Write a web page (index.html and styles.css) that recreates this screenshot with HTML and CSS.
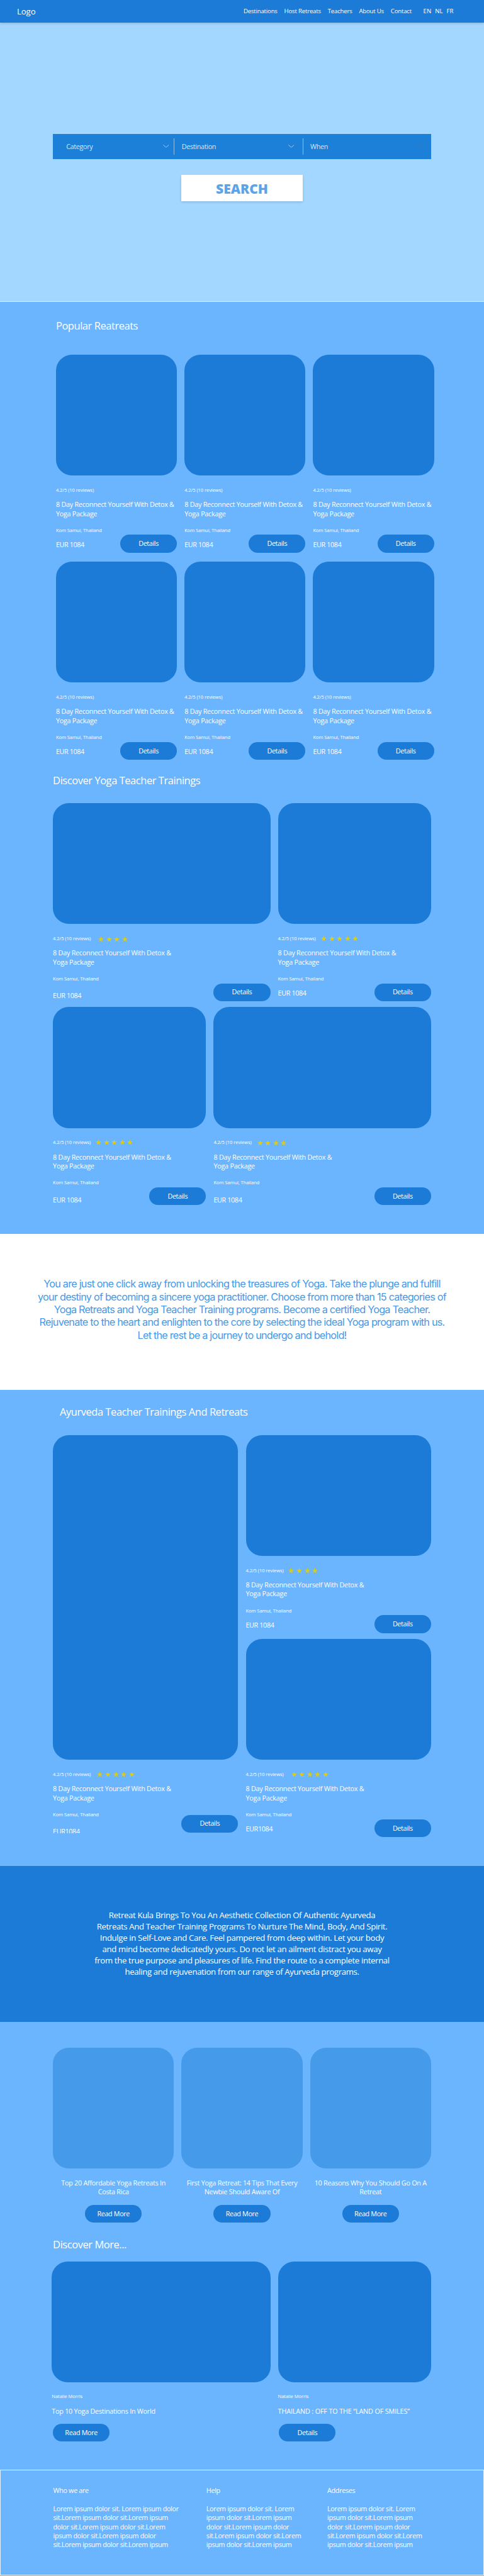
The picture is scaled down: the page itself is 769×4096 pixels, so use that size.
FILE: index.html
```html
<!DOCTYPE html>
<html lang="en">
<head>
<meta charset="utf-8">
<title>Retreat Kula</title>
<link rel="stylesheet" href="styles.css">
</head>
<body>
<svg class="defs" aria-hidden="true">
  <symbol id="star" viewBox="0 0 14 13.4"><path d="M7 0l1.65 5.1H14l-4.33 3.15 1.65 5.1L7 10.2l-4.33 3.15 1.65-5.1L0 5.1h5.35z"/></symbol>
  <symbol id="chevron" viewBox="0 0 16 8"><path d="M.5.6 8 7.2 15.500.6" fill="none" stroke="currentColor" stroke-width="1.2"/></symbol>
</svg>

<header class="topbar">
  <a class="logo">Logo</a>
  <nav class="nav"><a>Destinations</a><a>Host Retreats</a><a>Teachers</a><a>About Us</a><a>Contact</a></nav>
  <div class="langs"><a>EN</a><a>NL</a><a>FR</a></div>
</header>

<section class="hero">
  <form class="search">
    <div class="field field-category"><span>Category</span><svg class="chev"><use href="#chevron"/></svg></div>
    <div class="field field-destination"><span>Destination</span><svg class="chev"><use href="#chevron"/></svg></div>
    <div class="field field-when"><span>When</span><svg class="chev chev-dim"><use href="#chevron"/></svg></div>
  </form>
  <button class="search-btn">SEARCH</button>
</section>

<main>
<section class="listing">
  <h2 class="heading heading-popular">Popular Reatreats</h2>
  <div class="grid-3">
    <article class="card"><div class="photo"></div><div class="rating"><span>4.2/5 (10 reviews)</span></div><h3>8 Day Reconnect Yourself With Detox &amp;<br>Yoga Package</h3><p class="place">Kom Samui, Thailand</p><div class="buy"><span>EUR 1084</span><a class="btn">Details</a></div></article>
    <article class="card"><div class="photo"></div><div class="rating"><span>4.2/5 (10 reviews)</span></div><h3>8 Day Reconnect Yourself With Detox &amp;<br>Yoga Package</h3><p class="place">Kom Samui, Thailand</p><div class="buy"><span>EUR 1084</span><a class="btn">Details</a></div></article>
    <article class="card"><div class="photo"></div><div class="rating"><span>4.2/5 (10 reviews)</span></div><h3>8 Day Reconnect Yourself With Detox &amp;<br>Yoga Package</h3><p class="place">Kom Samui, Thailand</p><div class="buy"><span>EUR 1084</span><a class="btn">Details</a></div></article>
    <article class="card"><div class="photo"></div><div class="rating"><span>4.2/5 (10 reviews)</span></div><h3>8 Day Reconnect Yourself With Detox &amp;<br>Yoga Package</h3><p class="place">Kom Samui, Thailand</p><div class="buy"><span>EUR 1084</span><a class="btn">Details</a></div></article>
    <article class="card"><div class="photo"></div><div class="rating"><span>4.2/5 (10 reviews)</span></div><h3>8 Day Reconnect Yourself With Detox &amp;<br>Yoga Package</h3><p class="place">Kom Samui, Thailand</p><div class="buy"><span>EUR 1084</span><a class="btn">Details</a></div></article>
    <article class="card"><div class="photo"></div><div class="rating"><span>4.2/5 (10 reviews)</span></div><h3>8 Day Reconnect Yourself With Detox &amp;<br>Yoga Package</h3><p class="place">Kom Samui, Thailand</p><div class="buy"><span>EUR 1084</span><a class="btn">Details</a></div></article>
  </div>

  <h2 class="heading heading-trainings">Discover Yoga Teacher Trainings</h2>
  <div class="trainings">
    <div class="row row-wide-first">
      <article class="card price-low"><div class="photo"></div><div class="rating"><span>4.2/5 (10 reviews)</span><div class="stars stars-a"><svg><use href="#star"/></svg><svg><use href="#star"/></svg><svg><use href="#star"/></svg><svg><use href="#star"/></svg></div></div><h3>8 Day Reconnect Yourself With Detox &amp;<br>Yoga Package</h3><p class="place">Kom Samui, Thailand</p><div class="buy"><span>EUR 1084</span><a class="btn">Details</a></div></article>
      <article class="card"><div class="photo"></div><div class="rating"><span>4.2/5 (10 reviews)</span><div class="stars stars-b"><svg><use href="#star"/></svg><svg><use href="#star"/></svg><svg><use href="#star"/></svg><svg><use href="#star"/></svg><svg><use href="#star"/></svg></div></div><h3>8 Day Reconnect Yourself With Detox &amp;<br>Yoga Package</h3><p class="place">Kom Samui, Thailand</p><div class="buy"><span>EUR 1084</span><a class="btn">Details</a></div></article>
    </div>
    <div class="row row-wide-last">
      <article class="card price-low"><div class="photo"></div><div class="rating"><span>4.2/5 (10 reviews)</span><div class="stars stars-c"><svg><use href="#star"/></svg><svg><use href="#star"/></svg><svg><use href="#star"/></svg><svg><use href="#star"/></svg><svg><use href="#star"/></svg></div></div><h3>8 Day Reconnect Yourself With Detox &amp;<br>Yoga Package</h3><p class="place">Kom Samui, Thailand</p><div class="buy"><span>EUR 1084</span><a class="btn">Details</a></div></article>
      <article class="card price-low"><div class="photo"></div><div class="rating"><span>4.2/5 (10 reviews)</span><div class="stars stars-d"><svg><use href="#star"/></svg><svg><use href="#star"/></svg><svg><use href="#star"/></svg><svg><use href="#star"/></svg></div></div><h3>8 Day Reconnect Yourself With Detox &amp;<br>Yoga Package</h3><p class="place">Kom Samui, Thailand</p><div class="buy"><span>EUR 1084</span><a class="btn">Details</a></div></article>
    </div>
  </div>
</section>

<section class="pitch">
  <p>You are just one click away from unlocking the treasures of Yoga. Take the plunge and fulfill<br>your destiny of becoming a sincere yoga practitioner. Choose from more than 15 categories of<br>Yoga Retreats and Yoga Teacher Training programs. Become a certified Yoga Teacher.<br>Rejuvenate to the heart and enlighten to the core by selecting the ideal Yoga program with us.<br>Let the rest be a journey to undergo and behold!</p>
</section>

<section class="ayurveda">
  <h2 class="heading heading-ayurveda">Ayurveda Teacher Trainings And Retreats</h2>
  <div class="split">
    <article class="card card-tall"><div class="photo"></div><div class="rating"><span>4.2/5 (10 reviews)</span><div class="stars stars-e"><svg><use href="#star"/></svg><svg><use href="#star"/></svg><svg><use href="#star"/></svg><svg><use href="#star"/></svg><svg><use href="#star"/></svg></div></div><h3>8 Day Reconnect Yourself With Detox &amp;<br>Yoga Package</h3><p class="place">Kom Samui, Thailand</p><div class="buy"><span>EUR1084</span><a class="btn">Details</a></div></article>
    <div class="stack">
      <article class="card"><div class="photo"></div><div class="rating"><span>4.2/5 (10 reviews)</span><div class="stars stars-c"><svg><use href="#star"/></svg><svg><use href="#star"/></svg><svg><use href="#star"/></svg><svg><use href="#star"/></svg></div></div><h3>8 Day Reconnect Yourself With Detox &amp;<br>Yoga Package</h3><p class="place">Kom Samui, Thailand</p><div class="buy"><span>EUR 1084</span><a class="btn">Details</a></div></article>
      <article class="card"><div class="photo"></div><div class="rating"><span>4.2/5 (10 reviews)</span><div class="stars stars-f"><svg><use href="#star"/></svg><svg><use href="#star"/></svg><svg><use href="#star"/></svg><svg><use href="#star"/></svg><svg><use href="#star"/></svg></div></div><h3>8 Day Reconnect Yourself With Detox &amp;<br>Yoga Package</h3><p class="place">Kom Samui, Thailand</p><div class="buy"><span>EUR1084</span><a class="btn">Details</a></div></article>
    </div>
  </div>
</section>

<section class="about">
  <p>Retreat Kula Brings To You An Aesthetic Collection Of Authentic Ayurveda<br>Retreats And Teacher Training Programs To Nurture The Mind, Body, And Spirit.<br>Indulge in Self-Love and Care. Feel pampered from deep within. Let your body<br>and mind become dedicatedly yours. Do not let an ailment distract you away<br>from the true purpose and pleasures of life. Find the route to a complete internal<br>healing and rejuvenation from our range of Ayurveda programs.</p>
</section>

<section class="blog">
  <div class="posts">
    <article class="post"><div class="photo photo-light"></div><h3>Top 20 Affordable Yoga Retreats In<br>Costa Rica</h3><a class="btn">Read More</a></article>
    <article class="post"><div class="photo photo-light"></div><h3>First Yoga Retreat: 14 Tips That Every<br>Newbie Should Aware Of</h3><a class="btn">Read More</a></article>
    <article class="post"><div class="photo photo-light"></div><h3>10 Reasons Why You Should Go On A<br>Retreat</h3><a class="btn">Read More</a></article>
  </div>
  <h2 class="heading heading-more">Discover More...</h2>
  <div class="features">
    <article class="feature"><div class="photo"></div><p class="author">Natalie Morris</p><h3>Top 10 Yoga Destinations In World</h3><a class="btn">Read More</a></article>
    <article class="feature"><div class="photo"></div><p class="author">Natalie Morris</p><h3 class="caps">THAILAND : OFF TO THE “LAND OF SMILES”</h3><a class="btn">Details</a></article>
  </div>
</section>
</main>

<footer class="footer">
  <div><h4>Who we are</h4><p>Lorem ipsum dolor sit. Lorem ipsum dolor<br>sit.Lorem ipsum dolor sit.Lorem ipsum<br>dolor sit.Lorem ipsum dolor sit.Lorem<br>ipsum dolor sit.Lorem ipsum dolor<br>sit.Lorem ipsum dolor sit.Lorem ipsum</p></div>
  <div><h4>Help</h4><p>Lorem ipsum dolor sit. Lorem<br>ipsum dolor sit.Lorem ipsum<br>dolor sit.Lorem ipsum dolor<br>sit.Lorem ipsum dolor sit.Lorem<br>ipsum dolor sit.Lorem ipsum</p></div>
  <div><h4>Addreses</h4><p>Lorem ipsum dolor sit. Lorem<br>ipsum dolor sit.Lorem ipsum<br>dolor sit.Lorem ipsum dolor<br>sit.Lorem ipsum dolor sit.Lorem<br>ipsum dolor sit.Lorem ipsum</p></div>
</footer>
</body>
</html>
```
FILE: styles.css
```css
/* The layout is designed on a 128rem wide canvas. */
html { font-size: calc(100vw / 128); }
* { box-sizing: border-box; }
body {
  margin: 0;
  background: #6bb4fe;
  color: #fff;
  font-family: "Open Sans", "Noto Sans", sans-serif;
  font-size: 1.8rem;
  line-height: 2.4rem;
  letter-spacing: -.023em;
  white-space: nowrap;
}
h2, h3, h4, p { margin: 0; font-weight: 400; }
.defs { display: none; }

/* Header */
.topbar {
  position: relative;
  display: flex;
  align-items: center;
  height: 6rem;
  padding: 0 8.1rem 0 4.5rem;
  background: #1c7bd7;
  box-shadow: 0 .3rem .6rem rgba(0, 0, 0, .16);
  font-size: 1.6rem;
}
.logo { font-size: 2.2rem; letter-spacing: -.01em; margin-right: auto; }
.nav { display: flex; gap: 1.8rem; letter-spacing: -.02em; }
.langs { display: flex; gap: 1rem; margin-left: 3.1rem; letter-spacing: 0; }

/* Hero with search */
.hero {
  height: 73.7rem;
  padding-top: 29.4rem;
  background: #a3d7ff;
}
.search {
  display: grid;
  grid-template-columns: 32rem 34rem 34rem;
  width: 100rem;
  height: 6.7rem;
  margin: 0 auto;
  padding: 1.2rem 0;
  background: #1c80d8;
  color: #d6e8fa;
  letter-spacing: -.03em;
}
.field {
  display: flex;
  align-items: center;
  justify-content: space-between;
  padding: 0 1.3rem 0 2rem;
}
.field + .field { border-left: .2rem solid #8fc3ef; padding-left: 1.9rem; padding-right: 2.2rem; }
.field-category { padding-left: 3.5rem; }
.field-when.field-when { padding-right: 1.8rem; }
.chev { width: 1.6rem; height: .8rem; }
.chev-dim { color: #3f7bb4; }
.search-btn {
  display: block;
  width: 32rem;
  height: 7rem;
  margin: 4.2rem auto 0;
  padding: .4rem 0 0;
  border: 0;
  background: #fff;
  color: #5ba4e8;
  box-shadow: 0 .3rem .6rem rgba(0, 0, 0, .16);
  font: 800 3.5rem/6rem "Open Sans", sans-serif;
}

/* Shared pieces */
.heading { font-size: 2.75rem; line-height: 3.6rem; letter-spacing: -.028em; }
.photo { height: 32rem; border-radius: 4.2rem; background: #1c7bd7; }
.photo-light { background: #459aea; }
.btn {
  display: flex;
  align-items: center;
  justify-content: center;
  width: 15rem;
  height: 4.7rem;
  border-radius: 2.4rem;
  background: #1c7bd7;
  letter-spacing: -.033em;
}
.card h3, .post h3, .feature h3 { font-size: 1.8rem; }
.rating, .place, .author { font-size: 1.26rem; line-height: 1.6rem; letter-spacing: -.009em; }
.rating { display: flex; align-items: center; height: 1.6rem; margin: 3.1rem 0 1.8rem; }
.rating > span { width: 10rem; }
.place { margin: 2.5rem 0 .3rem; }
.buy { display: flex; justify-content: space-between; align-items: flex-start; letter-spacing: -.035em; }
.buy > span { margin-top: 1.4rem; }
.price-low .buy > span { margin-top: 2.1rem; }

.stars { display: flex; gap: .6rem; }
.stars svg { width: 1.5rem; height: 1.44rem; fill: #e2cd0b; }
.stars-a { margin: .2rem 0 0 2rem; }
.stars-b { margin: -.2rem 0 0 1.4rem; }
.stars-c { margin: -.1rem 0 0 1.3rem; }
.stars-d { margin-left: 1.5rem; }
.stars-e { margin: -.1rem 0 0 1.7rem; }
.stars-f { margin: -.1rem 0 0 2rem; }

/* Popular retreats and trainings */
.listing { height: 246.9rem; border-top: 1px solid #dcedff; padding: 0 14rem; }
.heading-popular { padding: 4.6rem 0 0 .8rem; }
.grid-3 {
  display: grid;
  grid-template-columns: repeat(3, 32rem);
  gap: 2.4rem 2rem;
  margin: 5.8rem 0 0 .8rem;
}
.heading-trainings { margin-top: 3.6rem; }
.trainings { display: grid; gap: 1.6rem; margin-top: 4.3rem; }
.row { display: grid; gap: 2rem; }
.row-wide-first { grid-template-columns: 57.5rem 40.5rem; }
.row-wide-last { grid-template-columns: 40.5rem 57.5rem; }

/* White text band */
.pitch {
  display: flex;
  justify-content: center;
  height: 41.3rem;
  padding-top: 11.5rem;
  background: #fff;
  color: #4499e8;
  font: 2.7rem/3.4rem Inter, sans-serif;
  letter-spacing: -.048em;
  text-align: center;
}

/* Ayurveda */
.ayurveda { height: 125.9rem; padding: 4rem 14rem 0; }
.heading-ayurveda { padding-left: 1.8rem; }
.split { display: grid; grid-template-columns: 49rem 49rem; gap: 2rem; margin-top: 4.3rem; }
.stack { display: grid; gap: 1.6rem; align-content: start; }
.card-tall .photo { height: 86rem; }
.card-tall .place { margin-bottom: -.9rem; }
.card-tall .buy > span { height: 1.6rem; margin-top: 3.3rem; overflow: hidden; }

/* Dark text band */
.about {
  display: flex;
  justify-content: center;
  height: 41.3rem;
  padding-top: 11.6rem;
  background: #1c7bd7;
  font-size: 2.2rem;
  line-height: 3rem;
  letter-spacing: -.027em;
  text-align: center;
}

/* Blog */
.blog { height: 118.5rem; padding: 6.8rem 14rem 0; }
.posts { display: grid; grid-template-columns: repeat(3, 32rem); gap: 2rem; }
.post { display: flex; flex-direction: column; align-items: center; text-align: center; }
.post .photo { width: 100%; }
.post h3 { margin: 2.7rem 0 2.2rem; }
.heading-more { margin-top: 3.9rem; }
.features { display: grid; grid-template-columns: 57.8rem 40.5rem; gap: 2rem; margin: 2.7rem 0 0 -.3rem; }
.author { margin: 3.1rem 0 1.8rem; }
.feature .caps { letter-spacing: -.013em; }
.feature .btn { margin: 2.1rem 0 0 .3rem; }

/* Footer */
.footer {
  display: grid;
  grid-template-columns: 38.5rem 30rem auto;
  gap: 2rem;
  height: 28.1rem;
  padding: 4.2rem 0 0 13.9rem;
  border: 1px solid #e4f1ff;
  letter-spacing: -.03em;
}
.footer h4 { margin-bottom: 2.4rem; font-size: 1.8rem; }
```
